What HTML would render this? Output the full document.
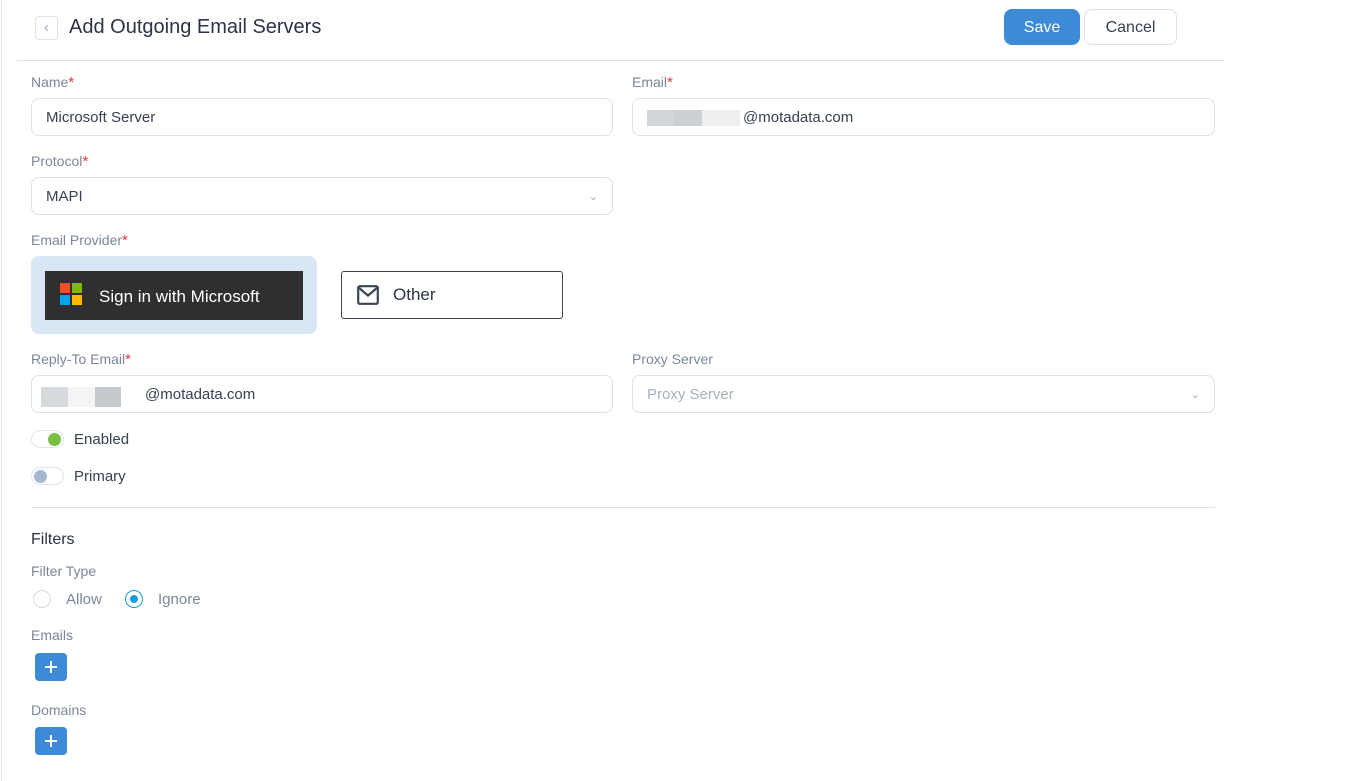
<!DOCTYPE html>
<html><head><style>
*{box-sizing:border-box;margin:0;padding:0}
body{width:1355px;height:781px;background:#fff;font-family:"Liberation Sans",sans-serif;position:relative;overflow:hidden;color:#364152}
.a{position:absolute}
.lbl{position:absolute;font-size:14px;color:#7b8799}
.lbl b{color:#e53935;font-weight:normal;font-size:15px}
.inp{position:absolute;height:38px;border:1px solid #dde2ea;border-radius:8px;font-size:15px;color:#364152;padding-left:14px;line-height:38px}
.tog{position:absolute;width:33px;height:18px;border:1px solid #e2e6ec;border-radius:9px;left:31px}
.tog i{position:absolute;top:2px;width:13px;height:13px;border-radius:50%}
.plus{position:absolute;left:35px;width:32px;height:28px;background:#3d8ad6;border-radius:4px}
.plus:before{content:"";position:absolute;left:10px;top:13px;width:12px;height:1.5px;background:#fff}
.plus:after{content:"";position:absolute;left:15.25px;top:8px;width:1.5px;height:12px;background:#fff}
</style></head><body>
<div class="a" style="left:1px;top:0;width:1px;height:781px;background:#e5e8ee"></div>
<div class="a" style="left:35px;top:16px;width:23px;height:24px;border:1px solid #dfe3ea;border-radius:4px;color:#9aa4b2;font-size:15px;text-align:center;line-height:21px">‹</div>
<div class="a" style="left:69px;top:16px;font-size:20px;color:#2b3445">Add Outgoing Email Servers</div>
<div class="a" style="left:1004px;top:9px;width:76px;height:36px;background:#3d8ad6;border-radius:8px;color:#fff;font-size:16px;text-align:center;line-height:38px">Save</div>
<div class="a" style="left:1084px;top:9px;width:93px;height:36px;border:1px solid #dde2ea;border-radius:8px;color:#364152;font-size:16px;text-align:center;line-height:36px">Cancel</div>
<div class="a" style="left:17px;top:60px;width:1207px;height:1px;background:#dde2ea"></div>

<div class="lbl" style="left:31px;top:74px">Name<b>*</b></div>
<div class="inp" style="left:31px;top:98px;width:582px">Microsoft Server</div>
<div class="lbl" style="left:632px;top:74px">Email<b>*</b></div>
<div class="inp" style="left:632px;top:98px;width:583px;padding-left:110px"><span class="a" style="left:14px;top:11px;width:27px;height:16px;background:#d2d5da"></span><span class="a" style="left:41px;top:11px;width:28px;height:16px;background:#ccd0d5"></span><span class="a" style="left:69px;top:11px;width:38px;height:16px;background:#eceef0"></span>@motadata.com</div>

<div class="lbl" style="left:31px;top:153px">Protocol<b>*</b></div>
<div class="inp" style="left:31px;top:177px;width:582px">MAPI<span class="a" style="right:14px;top:0;color:#a0a8b5;font-size:11px">⌄</span></div>

<div class="lbl" style="left:31px;top:232px">Email Provider<b>*</b></div>
<div class="a" style="left:31px;top:256px;width:286px;height:78px;background:#d9e6f5;border-radius:8px"></div>
<div class="a" style="left:45px;top:271px;width:258px;height:49px;background:#2f2f2f;color:#fff;font-size:17px;line-height:51px;padding-left:54px">Sign in with Microsoft</div>
<div class="a" style="left:60px;top:283px;width:10px;height:10px;background:#f25022"></div>
<div class="a" style="left:72px;top:283px;width:10px;height:10px;background:#7fba00"></div>
<div class="a" style="left:60px;top:295px;width:10px;height:10px;background:#00a4ef"></div>
<div class="a" style="left:72px;top:295px;width:10px;height:10px;background:#ffb900"></div>
<div class="a" style="left:341px;top:271px;width:222px;height:48px;border:1px solid #3b4556;border-radius:3px;font-size:17px;color:#2b3445;line-height:46px;padding-left:51px">Other
<svg class="a" style="left:15px;top:13px" width="22" height="20" viewBox="0 0 22 20"><rect x="1.2" y="1.2" width="19.6" height="17.6" rx="1.5" fill="none" stroke="#3b4556" stroke-width="2.2"/><path d="M1.5 2.5 L11 10.5 L20.5 2.5" fill="none" stroke="#3b4556" stroke-width="2.2"/></svg></div>

<div class="lbl" style="left:31px;top:351px">Reply-To Email<b>*</b></div>
<div class="inp" style="left:31px;top:375px;width:582px;padding-left:113px"><span class="a" style="left:9px;top:11px;width:27px;height:20px;background:#d6d9dd"></span><span class="a" style="left:36px;top:11px;width:27px;height:20px;background:#f5f5f5"></span><span class="a" style="left:63px;top:11px;width:26px;height:20px;background:#c6c9cd"></span><span class="a" style="left:113px;top:0">@motadata.com</span></div>
<div class="lbl" style="left:632px;top:351px">Proxy Server</div>
<div class="inp" style="left:632px;top:375px;width:583px;color:#a7b0bd">Proxy Server<span class="a" style="right:14px;top:0;color:#a0a8b5;font-size:11px">⌄</span></div>

<div class="tog" style="top:430px"><i style="left:16px;background:#7ac043"></i></div>
<div class="a" style="left:74px;top:431px;font-size:15px">Enabled</div>
<div class="tog" style="top:467px"><i style="left:2px;background:#a6b8d0"></i></div>
<div class="a" style="left:74px;top:468px;font-size:15px">Primary</div>

<div class="a" style="left:31px;top:507px;width:1184px;height:1px;background:#dde2ea"></div>
<div class="a" style="left:31px;top:531px;font-size:16px;color:#2b3445">Filters</div>
<div class="lbl" style="left:31px;top:563px">Filter Type</div>
<div class="a" style="left:33px;top:590px;width:18px;height:18px;border:1px solid #d5dae1;border-radius:50%"></div>
<div class="a" style="left:66px;top:591px;font-size:15px;color:#7b8799">Allow</div>
<div class="a" style="left:125px;top:590px;width:18px;height:18px;border:1.5px solid #1a9be0;border-radius:50%"><i class="a" style="left:3.5px;top:3.5px;width:8px;height:8px;border-radius:50%;background:#1a9be0"></i></div>
<div class="a" style="left:158px;top:591px;font-size:15px;color:#7b8799">Ignore</div>
<div class="lbl" style="left:31px;top:627px">Emails</div>
<div class="plus" style="top:653px"></div>
<div class="lbl" style="left:31px;top:702px">Domains</div>
<div class="plus" style="top:727px"></div>
</body></html>
